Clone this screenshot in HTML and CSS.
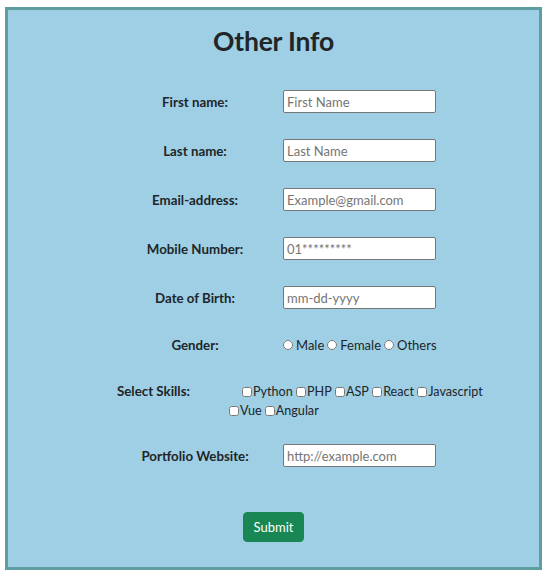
FILE: index.html
```html
<!DOCTYPE html>
<html lang="en">
<head>
<meta charset="utf-8">
<title>Other Info</title>
<link rel="stylesheet" href="styles.css">
</head>
<body>
<div class="card">
  <h3 class="title">Other Info</h3>
  <form class="form">
    <div class="row r1">
      <label class="lbl" for="fn">First name:</label>
      <input class="field" id="fn" type="text" placeholder="First Name">
    </div>
    <div class="row r2">
      <label class="lbl" for="ln">Last name:</label>
      <input class="field" id="ln" type="text" placeholder="Last Name">
    </div>
    <div class="row r2">
      <label class="lbl" for="em">Email-address:</label>
      <input class="field" id="em" type="text" placeholder="Example@gmail.com">
    </div>
    <div class="row r2">
      <label class="lbl" for="mn">Mobile Number:</label>
      <input class="field" id="mn" type="text" placeholder="01*********">
    </div>
    <div class="row r2">
      <label class="lbl" for="db">Date of Birth:</label>
      <input class="field" id="db" type="text" placeholder="mm-dd-yyyy">
    </div>
    <div class="row r3">
      <span class="lbl">Gender:</span>
      <div class="opts">
        <label class="opt"><input class="radio" type="radio" name="g">Male</label>
        <label class="opt"><input class="radio" type="radio" name="g">Female</label>
        <label class="opt"><input class="radio" type="radio" name="g">Others</label>
      </div>
    </div>
    <div class="skills">
      <span class="skl">Select Skills:</span>
      <div class="checks">
        <label class="chk"><input class="box" type="checkbox">Python</label>
        <label class="chk"><input class="box" type="checkbox">PHP</label>
        <label class="chk"><input class="box" type="checkbox">ASP</label>
        <label class="chk"><input class="box" type="checkbox">React</label>
        <label class="chk"><input class="box" type="checkbox">Javascript</label><br>
        <label class="chk"><input class="box" type="checkbox">Vue</label>
        <label class="chk"><input class="box" type="checkbox">Angular</label>
      </div>
    </div>
    <div class="row r4">
      <label class="lbl" for="pw">Portfolio Website:</label>
      <input class="field" id="pw" type="text" placeholder="http://example.com">
    </div>
    <div class="actions">
      <button class="submit" type="button">Submit</button>
    </div>
  </form>
</div>
</body>
</html>
```
FILE: styles.css
```css
* { box-sizing: border-box; }
html, body { margin: 0; padding: 0; background: #ffffff; }
body {
  font-family: Lato, "Open Sans", "Noto Sans", sans-serif;
  color: #212529;
  font-size: 13px;
}
.card {
  margin: 7px 5px 5px 5px;
  width: 537px;
  height: 563px;
  border: 3px solid #5f9ea0;
  background: #9ecfe4;
  padding-top: 14px;
}
.title {
  margin: 0;
  text-align: center;
  font-size: 26.5px;
  font-weight: 700;
  line-height: 34px;
  color: #212529;
  letter-spacing: -0.2px;
}
.form {
  padding-left: 109px;
  display: flex;
  flex-direction: column;
}
.row {
  display: grid;
  grid-template-columns: 156px 153px;
  column-gap: 10px;
  align-items: center;
}
.r1 { margin-top: 32px; }
.r2 { margin-top: 26px; }
.r3 { margin-top: 28px; }
.r4 { margin-top: 24px; }
.lbl {
  text-align: center;
  font-weight: 700;
  font-size: 13.3px;
}
.field {
  width: 153px;
  height: 23px;
  border: 1px solid #767676;
  border-radius: 2px;
  background: #ffffff;
  padding: 0 3px;
  font-family: inherit;
  font-size: 13px;
  color: #212529;
  outline: none;
}
.field::placeholder { color: #757575; }
.opts {
  display: flex;
  align-items: center;
  gap: 3px;
  font-size: 13px;
  line-height: 16px;
}
.opt, .chk {
  display: inline-flex;
  align-items: center;
}
.radio {
  width: 10px;
  height: 10px;
  margin: 0 3px 0 0;
}
.skills {
  margin-top: 29px;
  display: flex;
  align-items: flex-start;
}
.skl {
  width: 112px;
  font-weight: 700;
  font-size: 13.3px;
  line-height: 19px;
}
.checks {
  width: 280px;
  text-indent: 13px;
  line-height: 19px;
  white-space: nowrap;
  font-size: 12.6px;
}
.chk {
  text-indent: 0;
  vertical-align: top;
}
.box {
  width: 10px;
  height: 10px;
  margin: 0 1px 0 0;
}
.actions {
  margin-top: 45px;
  padding-left: 126px;
}
.submit {
  width: 61px;
  height: 30px;
  background: #198754;
  border: 1px solid #198754;
  border-radius: 4px;
  color: #ffffff;
  font-family: inherit;
  font-size: 13px;
  padding: 0;
}
```
